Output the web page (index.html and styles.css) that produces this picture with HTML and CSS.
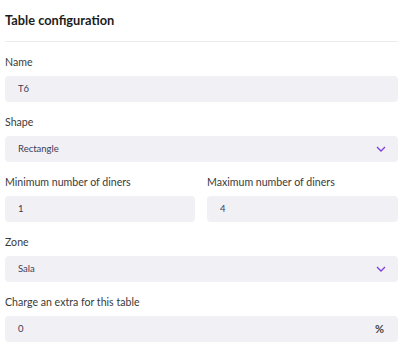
FILE: index.html
```html
<!DOCTYPE html>
<html lang="en">
<head>
    <meta charset="UTF-8">
    <title>Table configuration</title>
    <link rel="stylesheet" href="styles.css">
</head>
<body>
    <div class="panel">
        <header class="panel-head">
            <h2>Table configuration</h2>
        </header>

        <div class="field">
            <label>Name</label>
            <div class="input">T6</div>
        </div>

        <div class="field">
            <label>Shape</label>
            <div class="input select">
                <span>Rectangle</span>
                <svg class="chevron" width="10" height="6" viewBox="0 0 10 6"><path d="M1 1l4 4 4-4" fill="none" stroke="#7b3fe4" stroke-width="1.3"/></svg>
            </div>
        </div>

        <div class="row">
            <div class="field">
                <label>Minimum number of diners</label>
                <div class="input">1</div>
            </div>
            <div class="field">
                <label>Maximum number of diners</label>
                <div class="input">4</div>
            </div>
        </div>

        <div class="field">
            <label>Zone</label>
            <div class="input select">
                <span>Sala</span>
                <svg class="chevron" width="10" height="6" viewBox="0 0 10 6"><path d="M1 1l4 4 4-4" fill="none" stroke="#7b3fe4" stroke-width="1.3"/></svg>
            </div>
        </div>

        <div class="field">
            <label>Charge an extra for this table</label>
            <div class="input select">
                <span>0</span>
                <span class="suffix">%</span>
            </div>
        </div>
    </div>
</body>
</html>
```

FILE: styles.css
```css
body, h2 {
    margin: 0;
    padding: 0;
}

body {
    font-family: Lato, "Open Sans", sans-serif;
    background: #fff;
    color: #333;
}

.panel {
    padding: 11px 11px 0 5px;
}

.panel-head {
    border-bottom: 1px solid #ececf0;
    padding-bottom: 12px;
    margin-bottom: 12px;
}

.panel-head h2 {
    font-size: 12.8px;
    line-height: 18px;
    font-weight: 700;
    color: #1c1c1c;
}

.field {
    margin-bottom: 12px;
}

.field label {
    display: block;
    font-size: 10.6px;
    line-height: 16px;
    color: #3a3a3a;
    margin-bottom: 6px;
}

.input {
    height: 26px;
    box-sizing: border-box;
    background-color: #f1f0f5;
    border-radius: 4px;
    padding: 0 13px;
    font-size: 9.5px;
    line-height: 26px;
    color: #3c3c55;
}

.select {
    display: flex;
    align-items: center;
    justify-content: space-between;
}

.chevron {
    margin-right: -1px;
}

.suffix {
    font-size: 11px;
    font-weight: 700;
    color: #444;
    margin-right: 1px;
}

.row {
    display: grid;
    grid-template-columns: 190px 1fr;
    gap: 12px;
}
```
